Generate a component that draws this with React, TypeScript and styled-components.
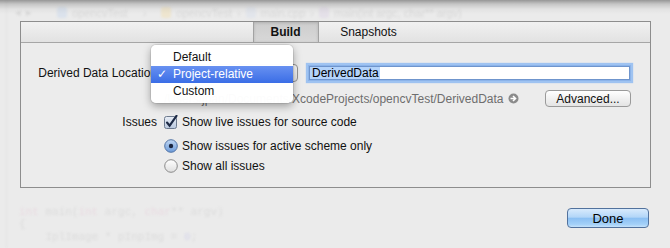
import React from 'react';
import styled, { createGlobalStyle } from 'styled-components';

const GlobalStyle = createGlobalStyle`
 html, body {
  margin: 0;
  padding: 0;
 }
 body {
  background: #ebebeb;
  font-family: "Liberation Sans", Arial, sans-serif;
  font-size: 12px;
  color: #111;
 }
`;

const Page = styled.div`
 position: relative;
 width: 670px;
 height: 248px;
 overflow: hidden;
 background: #ebebeb;
`;

const TopShadow = styled.div`
 position: absolute;
 left: 0;
 right: 0;
 top: 0;
 height: 14px;
 background: linear-gradient(rgba(0, 0, 0, 0.36), rgba(0, 0, 0, 0.16) 4px, rgba(0, 0, 0, 0.04) 9px, rgba(0, 0, 0, 0));
 pointer-events: none;
`;

// the editor window behind the sheet, blurred out
const Backdrop = styled.div`
 height: 100%;
 display: flex;
 flex-direction: column;
 filter: blur(1px);
 border-left: 1px solid #e3e3e3;
 margin-left: 6px;
 box-sizing: border-box;
`;

const Breadcrumb = styled.div`
 display: flex;
 align-items: center;
 gap: 5px;
 padding: 6px 0 0 8px;
 font-size: 11px;
 color: #d8d8d8;
 white-space: nowrap;
`;

const CrumbIcon = styled.span<{ $color: string }>`
 width: 10px;
 height: 11px;
 border-radius: 2px;
 background: ${p => p.$color};
`;

const Code = styled.div`
 margin-top: auto;
 padding: 0 0 5px 12px;
 font-family: "Liberation Mono", "Courier New", monospace;
 font-size: 11px;
 line-height: 12.5px;
 color: #dcdcdc;
 white-space: pre;
`;

const Kw = styled.span`
 color: #e9dae1;
`;

const Num = styled.span`
 color: #d6d6ea;
`;

const Sheet = styled.div`
 position: absolute;
 inset: 0;
 padding-top: 21px;
 display: flex;
 flex-direction: column;
`;

const Box = styled.div`
 margin-left: 20px;
 width: 631px;
 height: 167px;
 box-sizing: border-box;
 border: 1px solid #8d8d8d;
 background: #ececec;
`;

const TabBar = styled.div`
 height: 20px;
 border-bottom: 1px solid #a6a6a6;
 background: linear-gradient(#f1f1f1, #e2e2e2);
 display: flex;
 justify-content: center;
`;

const Tab = styled.div<{ $active?: boolean; $width: number }>`
 width: ${p => p.$width}px;
 box-sizing: border-box;
 display: flex;
 align-items: center;
 justify-content: center;
 font-size: 12px;
 font-weight: ${p => (p.$active ? 'bold' : 'normal')};
 color: #111;
 ${p =>
  p.$active &&
  `
  background: linear-gradient(#cdcdcd, #d8d8d8);
  border-left: 1px solid #a3a3a3;
  border-right: 1px solid #a3a3a3;
  box-shadow: inset 0 1px 3px rgba(0, 0, 0, 0.15);
 `}
`;

const Form = styled.div`
 padding-right: 20px;
`;

const FormRow = styled.div<{ $top: number; $height: number }>`
 display: grid;
 grid-template-columns: 136px 1fr;
 column-gap: 7px;
 margin-top: ${p => p.$top}px;
 height: ${p => p.$height}px;
 align-items: center;
`;

const Label = styled.div`
 text-align: right;
 white-space: nowrap;
`;

const Controls = styled.div`
 display: flex;
 align-items: center;
 height: 100%;
 position: relative;
`;

const Popup = styled.div`
 position: relative;
 width: 134px;
 height: 18px;
 box-sizing: border-box;
 border: 1px solid #959595;
 border-radius: 4px;
 background: linear-gradient(#ffffff, #e4e4e4);
`;

const Menu = styled.div`
 position: absolute;
 top: -20px;
 left: -14px;
 width: 142px;
 padding: 4px 0 3px;
 background: rgba(255, 255, 255, 0.98);
 border-radius: 5px;
 box-shadow: 0 3px 9px rgba(0, 0, 0, 0.35), 0 0 0 1px rgba(0, 0, 0, 0.08);
 z-index: 2;
`;

const MenuItem = styled.div<{ $selected?: boolean }>`
 position: relative;
 height: 17px;
 line-height: 17px;
 padding-left: 22px;
 font-size: 12px;
 color: ${p => (p.$selected ? '#fff' : '#111')};
 background: ${p => (p.$selected ? 'linear-gradient(#6891f1, #3a6de6)' : 'transparent')};
`;

const Check = styled.span`
 position: absolute;
 left: 6px;
 top: 0;
 font-family: "DejaVu Sans", sans-serif;
 font-size: 12px;
 font-weight: bold;
`;

const Field = styled.div`
 flex: 1;
 margin-left: 11px;
 height: 14px;
 box-sizing: border-box;
 border: 1px solid #6f95cd;
 background: #fff;
 box-shadow: 0 0 0 1px #8cb4ea, 0 0 1px 3px #9fc3f1;
 display: flex;
`;

const Selection = styled.span`
 background: #b3d3fb;
 padding: 0 1px 0 2px;
 line-height: 12px;
 font-size: 12px;
 color: #000;
`;

const PathText = styled.div`
 color: #6e6e6e;
 white-space: nowrap;
`;

const Advanced = styled.div`
 margin-left: auto;
 margin-right: -1px;
 width: 86px;
 height: 17px;
 box-sizing: border-box;
 border: 1px solid #9a9a9a;
 border-radius: 4px;
 background: linear-gradient(#ffffff, #f1f1f1 50%, #e4e4e4);
 display: flex;
 align-items: center;
 justify-content: center;
 font-size: 12px;
`;

const Option = styled.div`
 display: flex;
 align-items: center;
 gap: 4px;
 white-space: nowrap;
`;

const Footer = styled.div`
 display: flex;
 justify-content: flex-end;
 padding-right: 21px;
 margin-top: 20px;
`;

const DoneButton = styled.div`
 width: 82px;
 height: 20px;
 box-sizing: border-box;
 border: 1px solid #52729d;
 border-radius: 4px;
 background: linear-gradient(#d8eafc, #b3d6f8 45%, #8cc0f3 52%, #a3d0f8 85%, #c4e2fb);
 display: flex;
 align-items: center;
 justify-content: center;
 font-size: 13px;
 color: #000;
`;

const ArrowIcon = () => (
 <svg width="11" height="11" viewBox="0 0 11 11" style={{ marginLeft: 4 }}>
  <circle cx="5.5" cy="5.5" r="5" fill="#8b8b8b" />
  <path d="M2.5 5.5h4.2M5 3l2.6 2.5L5 8" stroke="#fff" strokeWidth="1.5" fill="none" />
 </svg>
);

const CheckboxIcon = () => (
 <svg width="14" height="14" viewBox="0 0 14 14">
  <defs>
   <linearGradient id="cb" x1="0" y1="0" x2="0" y2="1">
    <stop offset="0" stopColor="#e9eef6" />
    <stop offset="1" stopColor="#b9c8de" />
   </linearGradient>
  </defs>
  <rect x="0.5" y="1.5" width="12" height="12" rx="2" fill="url(#cb)" stroke="#6d7a8e" />
  <path d="M3 7.5l2.6 3.2L12.5 0.8" stroke="#1d2a45" strokeWidth="2.1" fill="none" strokeLinecap="round" />
 </svg>
);

const RadioIcon: React.FC<{ on?: boolean }> = ({ on }) => (
 <svg width="14" height="14" viewBox="0 0 14 14">
  <defs>
   <linearGradient id="ron" x1="0" y1="0" x2="0" y2="1">
    <stop offset="0" stopColor="#c2d8f3" />
    <stop offset="1" stopColor="#6b9ad9" />
   </linearGradient>
   <linearGradient id="roff" x1="0" y1="0" x2="0" y2="1">
    <stop offset="0" stopColor="#ffffff" />
    <stop offset="1" stopColor="#dedede" />
   </linearGradient>
  </defs>
  <circle cx="7" cy="7" r="6.3" fill={on ? 'url(#ron)' : 'url(#roff)'} stroke={on ? '#5475a6' : '#8a8a8a'} />
  {on && <circle cx="7" cy="7" r="2.2" fill="#1b2640" />}
 </svg>
);

const App: React.FC = () => {
 return (
  <>
   <GlobalStyle />
   <Page>
    <Backdrop>
     <Breadcrumb>
      <span>◂</span>
      <span>▸</span>
      <CrumbIcon $color="#dbe2ec" style={{ marginLeft: 20 }} />
      <span>opencvTest</span>
      <span style={{ margin: '0 10px' }}>›</span>
      <CrumbIcon $color="#eee5cf" />
      <span>opencvTest</span>
      <span>›</span>
      <CrumbIcon $color="#e2e5eb" />
      <span>main.cpp</span>
      <span>›</span>
      <CrumbIcon $color="#e4e0e8" />
      <span>main(int argc, char** argv)</span>
     </Breadcrumb>
     <Code>
      <Kw>int</Kw> main(<Kw>int</Kw> argc, <Kw>char</Kw>** argv){'\n'}
      {'{'}
      {'\n'}    IplImage * pInpImg = <Num>0</Num>;
     </Code>
    </Backdrop>
    <TopShadow />
    <Sheet>
     <Box>
      <TabBar>
       <Tab $active $width={66}>
        Build
       </Tab>
       <Tab $width={100}>Snapshots</Tab>
      </TabBar>
      <Form>
       <FormRow $top={20} $height={19}>
        <Label>Derived Data Location</Label>
        <Controls>
         <Popup>
          <Menu>
           <MenuItem>Default</MenuItem>
           <MenuItem $selected>
            <Check>✓</Check>
            Project-relative
           </MenuItem>
           <MenuItem>Custom</MenuItem>
          </Menu>
         </Popup>
         <Field>
          <Selection>DerivedData</Selection>
         </Field>
        </Controls>
       </FormRow>
       <FormRow $top={8} $height={17}>
        <span />
        <Controls>
         <PathText>/Users/jpan/Documents/XcodeProjects/opencvTest/DerivedData</PathText>
         <ArrowIcon />
         <Advanced>Advanced...</Advanced>
        </Controls>
       </FormRow>
       <FormRow $top={8} $height={14}>
        <Label>Issues</Label>
        <Option>
         <CheckboxIcon />
         Show live issues for source code
        </Option>
       </FormRow>
       <FormRow $top={10} $height={14}>
        <span />
        <Option>
         <RadioIcon on />
         Show issues for active scheme only
        </Option>
       </FormRow>
       <FormRow $top={6} $height={14}>
        <span />
        <Option>
         <RadioIcon />
         Show all issues
        </Option>
       </FormRow>
      </Form>
     </Box>
     <Footer>
      <DoneButton>Done</DoneButton>
     </Footer>
    </Sheet>
   </Page>
  </>
 );
};

export default App;
